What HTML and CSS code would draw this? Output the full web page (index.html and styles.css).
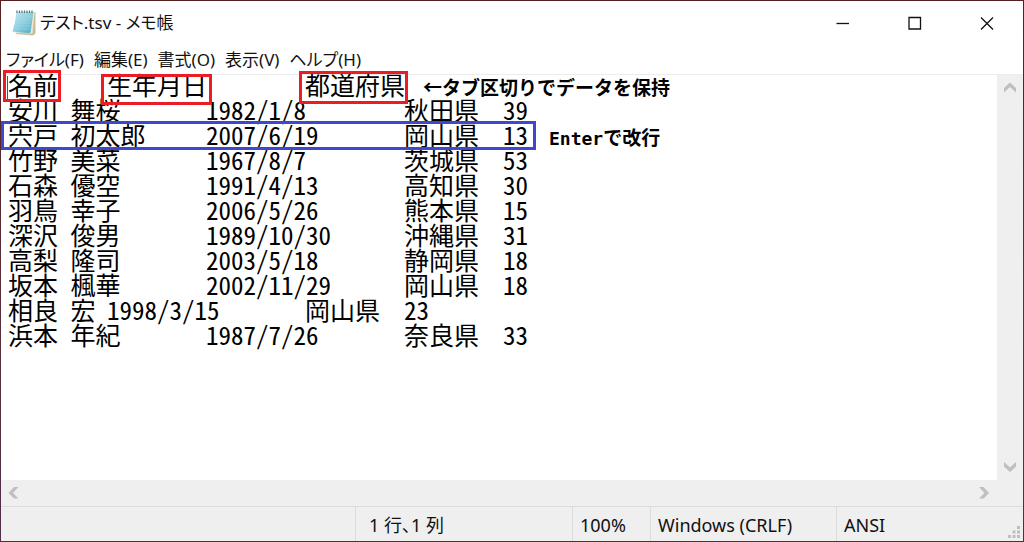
FILE: index.html
```html
<!DOCTYPE html>
<html lang="ja">
<head>
<meta charset="utf-8">
<meta name="viewport" content="width=device-width, initial-scale=1">
<title>テスト.tsv - メモ帳</title>
<link rel="stylesheet" href="styles.css">
</head>
<body>
<main class="window">
  <header class="titlebar">
    <svg class="app-icon" width="26" height="28" viewBox="0 0 26 28" aria-hidden="true">
      <defs>
        <linearGradient id="page" x1="0" y1="0" x2="1" y2="1">
          <stop offset="0" stop-color="#c4e9f1"/>
          <stop offset=".5" stop-color="#8fd0df"/>
          <stop offset="1" stop-color="#4aa9c2"/>
        </linearGradient>
      </defs>
      <path d="M6 4 L24.500 3 V24.500 L22 26.500 L5 25 Z" fill="#c9bd98"/>
      <path d="M5.500 3.500 L23.500 3 L21.500 24.500 L4 24 Z" fill="#efe9d4"/>
      <path d="M5.500 3 H22.500 L19.500 23.800 Q11 24.200 1.500 22.500 Q4.500 13 5.500 3 Z" fill="url(#page)"/>
      <path d="M6 8 H21 M5.500 11 H20.500 M5 14 H20 M4 17 H20 M3 20 H19" stroke="#a9dce8" stroke-width=".7" opacity=".7"/>
      <path d="M6 1.500 V4 M8.500 1.500 V4 M11 1.500 V4 M13.500 1.500 V4 M16 1.500 V4 M18.500 1.500 V4 M21 1.500 V4" stroke="#5c7077" stroke-width="1.200"/>
    </svg>
    <h1 class="title">テスト.tsv - メモ帳</h1>
    <div class="window-buttons">
      <button class="window-button" type="button" aria-label="最小化"><svg width="14" height="14" viewBox="0 0 14 14"><path d="M.5 7.500 H13" /></svg></button>
      <button class="window-button" type="button" aria-label="最大化"><svg width="14" height="14" viewBox="0 0 14 14"><path d="M1 1.500 H12.500 V13 H1 Z"/></svg></button>
      <button class="window-button" type="button" aria-label="閉じる"><svg width="14" height="14" viewBox="0 0 14 14"><path d="M1 1.500 L13 13.500 M13 1.500 L1 13.500"/></svg></button>
    </div>
  </header>
  <nav class="menubar">
    <button class="menu" type="button">ファイル(F)</button>
    <button class="menu" type="button">編集(E)</button>
    <button class="menu" type="button">書式(O)</button>
    <button class="menu" type="button">表示(V)</button>
    <button class="menu" type="button">ヘルプ(H)</button>
  </nav>
  <section class="editor">
    <textarea class="text" aria-label="本文" spellcheck="false" wrap="off">名前	生年月日	都道府県
安川 舞桜	1982/1/8	秋田県	39
宍戸 初太郎	2007/6/19	岡山県	13
竹野 美菜	1967/8/7	茨城県	53
石森 優空	1991/4/13	高知県	30
羽鳥 幸子	2006/5/26	熊本県	15
深沢 俊男	1989/10/30	沖縄県	31
高梨 隆司	2003/5/18	静岡県	18
坂本 楓華	2002/11/29	岡山県	18
相良 宏	1998/3/15	岡山県	23
浜本 年紀	1987/7/26	奈良県	33</textarea>
    <div class="scroll-v">
      <button class="scroll-button" type="button" aria-label="上へ"><svg width="14" height="12" viewBox="0 0 14 12"><path d="M1 6 L7 0.500 L13 6 V10.500 L7 5 L1 10.500 Z"/></svg></button>
      <button class="scroll-button" type="button" aria-label="下へ"><svg width="14" height="12" viewBox="0 0 14 12"><path d="M1 1 L7 6.500 L13 1 V5.500 L7 11 L1 5.500 Z"/></svg></button>
    </div>
    <div class="scroll-h">
      <button class="scroll-button" type="button" aria-label="左へ"><svg width="12" height="14" viewBox="0 0 12 14"><path d="M6 1 L0.500 7 L6 12.500 H10.500 L5 7 L10.500 1 Z"/></svg></button>
      <button class="scroll-button" type="button" aria-label="右へ"><svg width="12" height="14" viewBox="0 0 12 14"><path d="M1 1 L6.500 7 L1 12.500 H5.500 L11 7 L5.500 1 Z"/></svg></button>
    </div>
    <span class="caret"></span>
    <span class="mark mark-name"></span>
    <span class="mark mark-birth"></span>
    <span class="mark mark-area"></span>
    <span class="mark mark-row"></span>
    <span class="note note-tab">←タブ区切りでデータを保持</span>
    <span class="note note-enter"><span class="key">Enter</span>で改行</span>
  </section>
  <footer class="statusbar">
    <span class="cell cell-fill"></span>
    <span class="cell cell-position">1 行、1 列</span>
    <span class="cell cell-zoom">100%</span>
    <span class="cell cell-newline">Windows (CRLF)</span>
    <span class="cell cell-encoding">ANSI</span>
    <svg class="grip" width="12" height="12" viewBox="0 0 12 12" aria-hidden="true"><path d="M9 0h3v3h-3z M4.500 4.500h3v3h-3z M9 4.500h3v3h-3z M0 9h3v3h-3z M4.500 9h3v3h-3z M9 9h3v3h-3z"/></svg>
  </footer>
</main>
</body>
</html>
```
FILE: styles.css
```css
* { box-sizing: border-box; }

body {
  margin: 0;
  height: 100vh;
  padding: 1px;
  background: linear-gradient(#562020, #59303a 60%, #4d2f49);
  color: #111;
  font: 18px/24px "Noto Sans", "Noto Sans CJK JP", sans-serif;
}

button {
  margin: 0;
  padding: 0;
  border: 0;
  background: none;
  color: inherit;
  font: inherit;
}

.window {
  display: flex;
  flex-direction: column;
  height: 100%;
  background: #fff;
}

.titlebar {
  display: flex;
  align-items: center;
  height: 44px;
  padding-left: 10px;
}

.title {
  flex: 1;
  margin: 0 0 0 3px;
  font-size: 17px;
  font-weight: 400;
  font-feature-settings: "palt";
}

.window-buttons { display: flex; }

.window-button {
  display: grid;
  place-items: center;
  width: 72px;
  height: 44px;
}

.window-button path { fill: none; stroke: #111; stroke-width: 1.3; }

.menubar {
  display: flex;
  gap: 10px;
  height: 27px;
  padding: 3px 5px 0;
  font-size: 17px;
  font-feature-settings: "palt";
}

.editor {
  position: relative;
  display: grid;
  grid-template: minmax(0, 1fr) 26px / minmax(0, 1fr) 26px;
  flex: 1;
  min-height: 0;
  background: linear-gradient(#fff 2px, #ececec 2px 3px, #efefef 3px);
}

.text {
  grid-area: 1 / 1;
  width: 100%;
  height: 100%;
  padding: 0 7px;
  border: 0;
  outline: 0;
  resize: none;
  overflow: hidden;
  background: linear-gradient(#fff 2px, #ececec 2px 3px, #fff 3px);
  color: #000;
  font: 25px/25px "Noto Sans Mono CJK JP", "Noto Sans CJK JP", monospace;
  font-feature-settings: "hwid";
  tab-size: 99px;
}

.scroll-v {
  grid-area: 1 / 2;
  display: flex;
  flex-direction: column;
  justify-content: space-between;
  padding-top: 3px;
}

.scroll-h { grid-area: 2 / 1; display: flex; justify-content: space-between; }

.scroll-button {
  display: grid;
  place-items: center;
  width: 26px;
  height: 26px;
}

.scroll-button path { fill: #bfbfbf; }

.caret {
  position: absolute;
  left: 6px;
  top: 4px;
  width: 1px;
  height: 24px;
  background: #555;
}

.mark { position: absolute; border: 3px solid #ec1c24; }
.mark-name { left: 2px; top: -2px; width: 58px; height: 32px; }
.mark-birth { left: 100px; top: 2px; width: 111px; height: 31px; }
.mark-area { left: 298px; top: -1px; width: 109px; height: 33px; }
.mark-row { left: 0; top: 49px; width: 535px; height: 29px; border-color: #3f48cc; }

.note {
  position: absolute;
  color: #000;
  font: 700 19px/24px "Noto Sans CJK JP", sans-serif;
  white-space: nowrap;
}
.note-tab { left: 422px; top: 3px; }
.note-enter { left: 548px; top: 53px; }
.key { font-family: "DejaVu Sans Mono", monospace; font-size: 18px; }

.statusbar {
  position: relative;
  display: flex;
  height: 35px;
  border-top: 1px solid #dcdcdc;
  background: #efefef;
}

.cell { padding: 6px 7px; border-left: 1px solid #dcdcdc; white-space: nowrap; }
.cell-fill { flex: 1; border: 0; }
.cell-position { width: 217px; padding-left: 13px; font-feature-settings: "palt"; }
.cell-zoom { width: 78px; }
.cell-newline { width: 186px; }
.cell-encoding { width: 187px; }

.grip { position: absolute; right: 3px; bottom: 3px; fill: #bfbfbf; }
```
